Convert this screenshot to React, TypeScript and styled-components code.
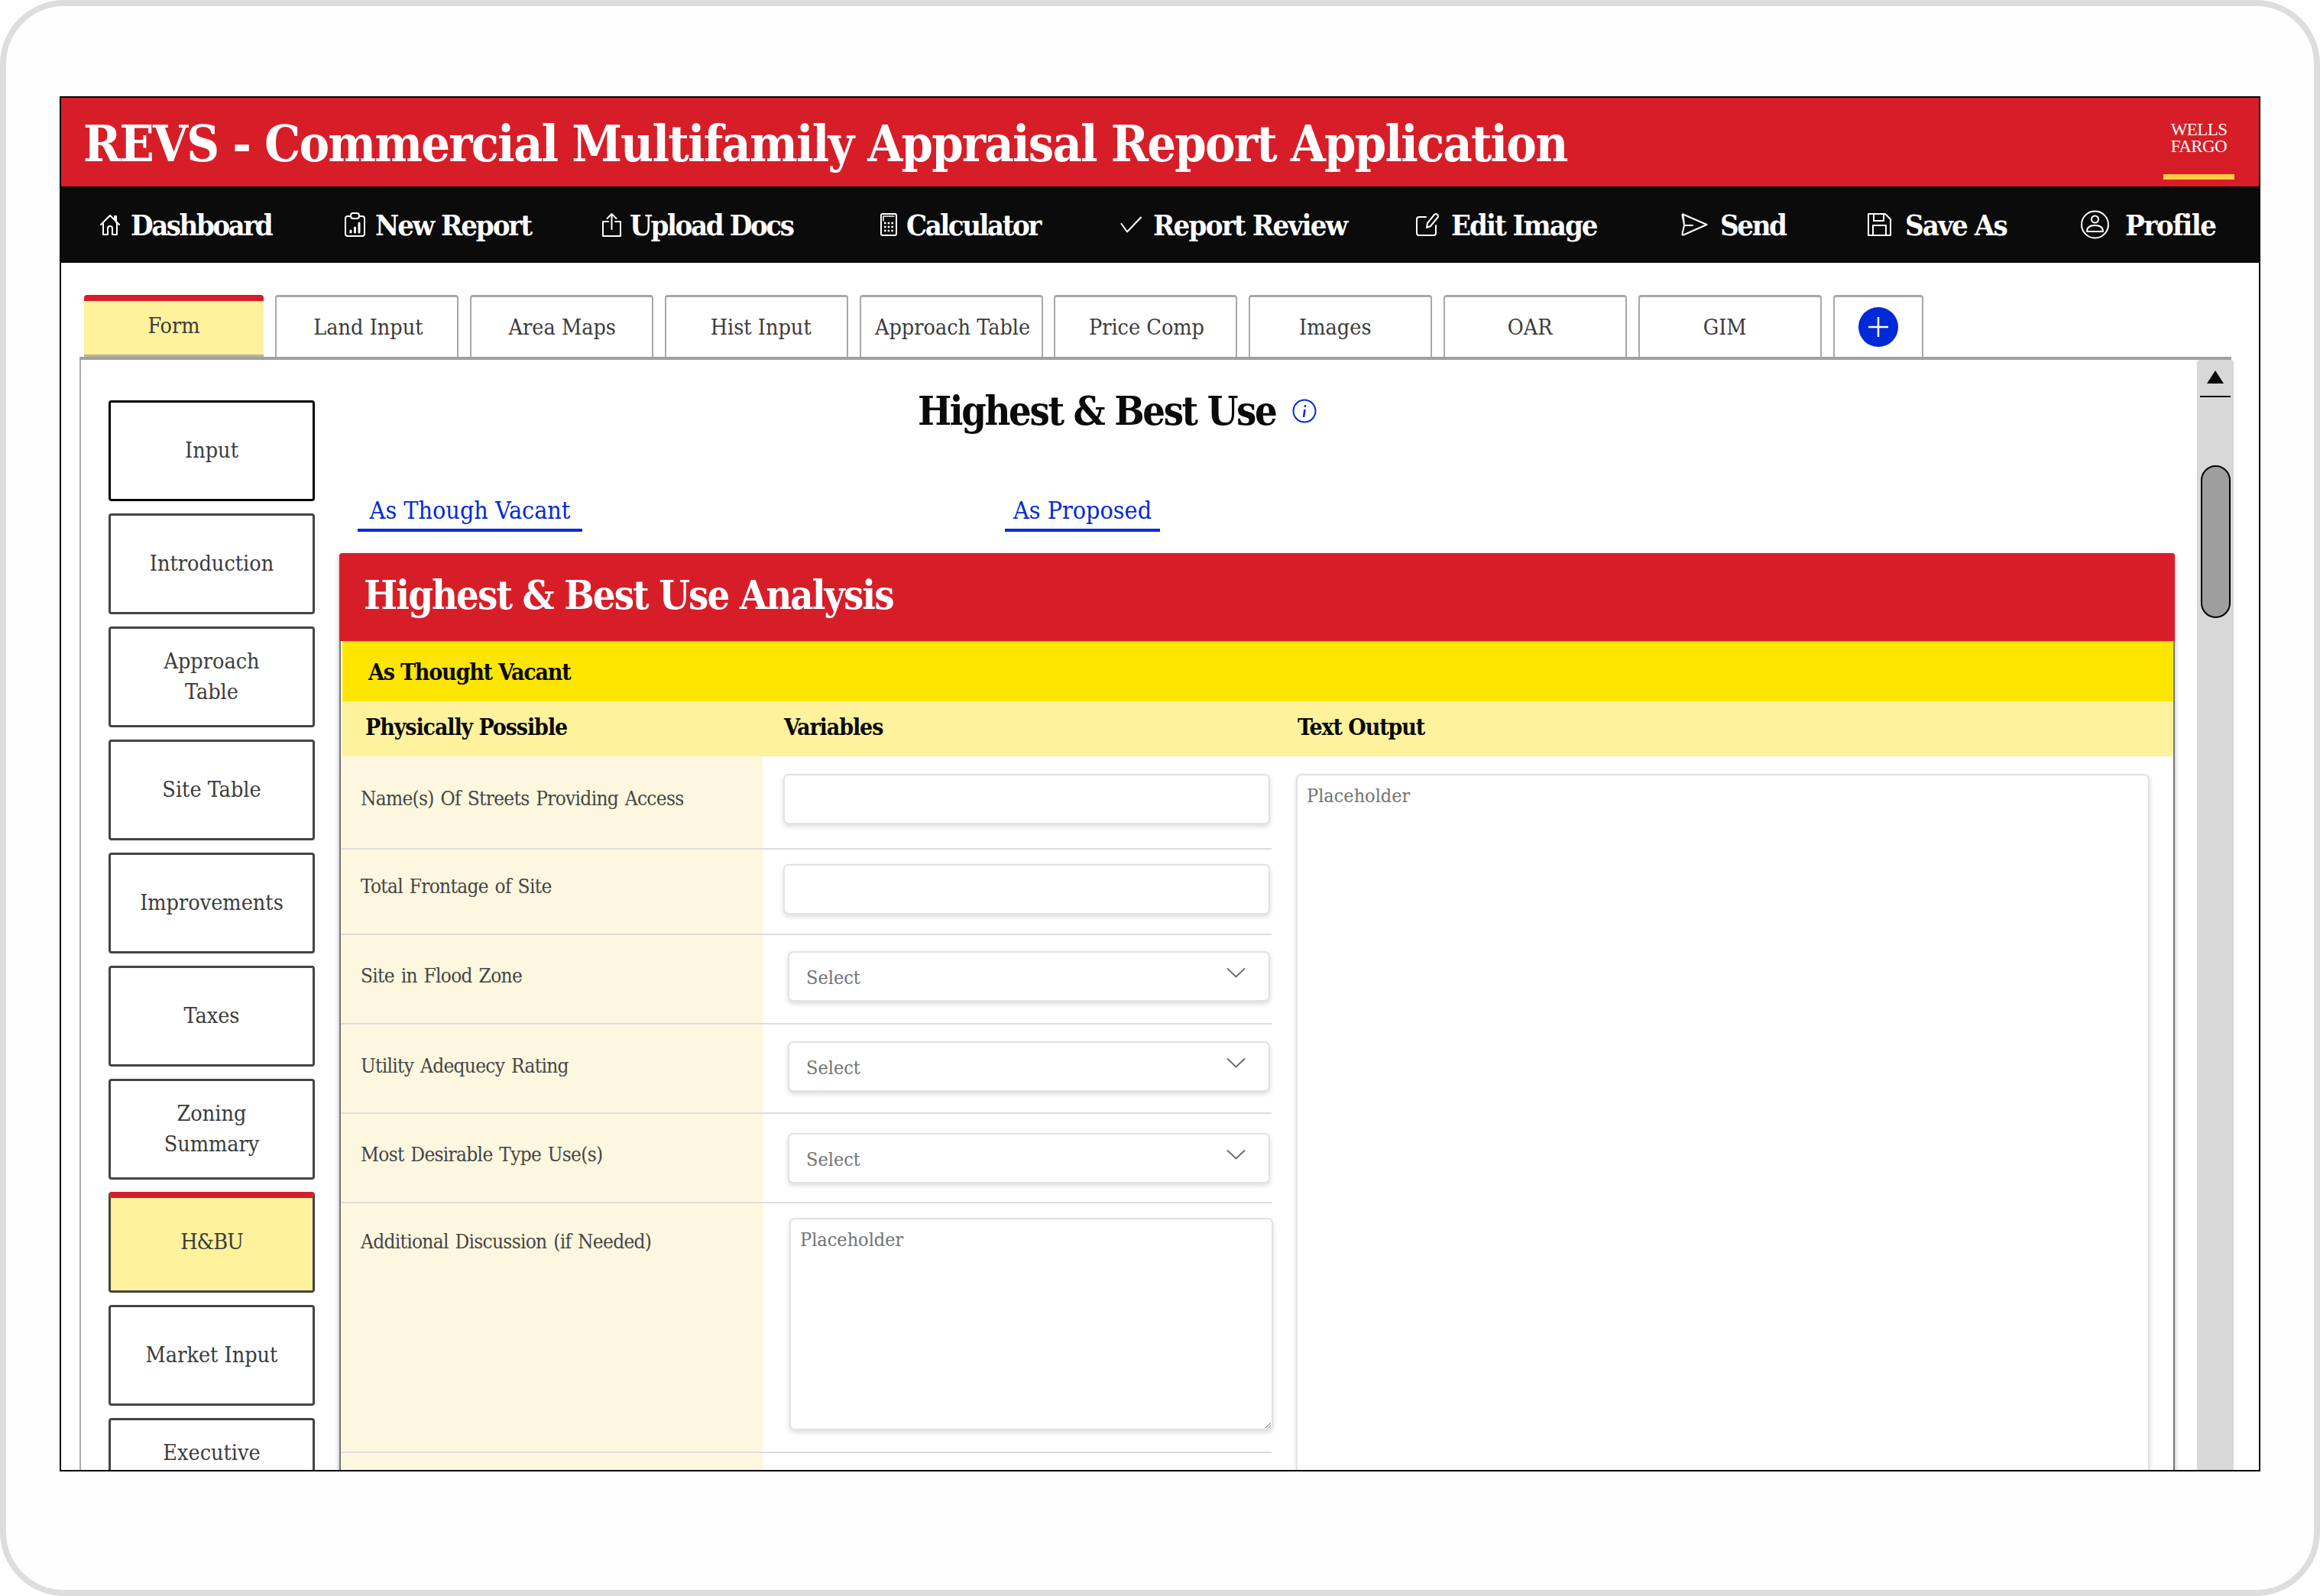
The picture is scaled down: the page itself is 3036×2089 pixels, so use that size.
import React from "react";
import styled, { createGlobalStyle } from "styled-components";

const RED = "#d71e28";
const BLUE = "#0029d9";
const PALE = "#fff29d";
const CREAM = "#fef7df";
const SLAB = `"DejaVu Serif Condensed", "DejaVu Serif", serif`;

const Global = createGlobalStyle`
  html, body { margin: 0; padding: 0; background: #fff; }
  * { box-sizing: border-box; }
  body { font-family: ${SLAB}; font-stretch: condensed; }
`;

const Frame = styled.div`
  width: 3036px; height: 2089px; border: 8px solid #ddd; border-radius: 84px;
  background: #fefefe; padding: 118px 0 0 70px; overflow: hidden;
`;
const AppWindow = styled.div`
  width: 2880px; height: 1800px; border: 2px solid #000; background: #fff;
  overflow: hidden; display: flex; flex-direction: column;
`;
const Header = styled.header`
  height: 116px; flex: none; background: ${RED}; display: flex; justify-content: space-between;
  align-items: stretch; padding: 0 32px 0 29px;
`;
const Title = styled.h1`
  margin: 4px 0 0; align-self: center; color: #fff; font-size: 66px; line-height: 80px; font-weight: 700;
  letter-spacing: -1.8px; white-space: nowrap;
`;
const Logo = styled.div`
  width: 93px; display: flex; flex-direction: column; align-items: center; padding: 31px 0 9px;
`;
const LogoText = styled.div`
  color: #fff; font-family: "Liberation Serif", serif; font-size: 23px; line-height: 22px; text-align: center;
  font-stretch: normal; letter-spacing: -0.6px;
`;
const LogoBar = styled.div`
  width: 100%; height: 7px; background: #ffcd41; margin-top: auto;
`;
const Nav = styled.nav`
  height: 100px; flex: none; background: #0b0b0b; display: flex; align-items: center; padding-left: 51px;
`;
const NavItem = styled.a<{ $w: number; $gap: number; $ls: number }>`
  width: ${(p) => p.$w}px; flex: none; display: flex; align-items: center; gap: ${(p) => p.$gap}px;
  color: #fff; font-size: 38px; line-height: 50px; font-weight: 700; white-space: nowrap; letter-spacing: ${(p) => p.$ls}px;
  svg { flex: none; }
`;
const NavLabel = styled.span`
  padding-top: 2px;
`;
const Content = styled.div`
  flex: 1; min-height: 0; display: flex; flex-direction: column; padding: 42px 0 0 24px;
`;
const TabRow = styled.div`
  height: 85px; flex: none; width: 2816px; display: flex; gap: 14.9px; padding-left: 6px;
  border-bottom: 4px solid #a0a0a0;
`;
const Tab = styled.div<{ $active?: boolean; $w?: number; $dx?: number }>`
  width: ${(p) => p.$w ?? 240}px; height: 81px; flex: none; display: flex; align-items: center; justify-content: center;
  font-size: 28.5px; color: #3c3c3c; border-radius: 4px 4px 0 0;
  border: 2px solid #a8a8a8; border-top-width: 3px; border-bottom: 0;
  background: #fff;
  span { transform: translateX(${(p) => p.$dx ?? 0}px); }
  ${(p) => p.$active && `background:${PALE}; border:0; border-top:8px solid ${RED}; border-bottom:3px solid #b5b5a0; width:235px; padding-bottom:5px;`}
`;
const PlusCircle = styled.span`
  width: 52px; height: 52px; border-radius: 50%; background: ${BLUE}; display: flex; align-items: center; justify-content: center;
`;
const Panel = styled.div`
  flex: 1; min-height: 0; width: 2819px; display: flex; border-left: 2px solid #aaa; padding-left: 36px; overflow: hidden;
`;
const Sidebar = styled.div`
  width: 270px; flex: none; display: flex; flex-direction: column; gap: 16px; padding-top: 53px;
`;
const SideBtn = styled.div<{ $active?: boolean; $first?: boolean }>`
  height: 132px; flex: none; display: flex; align-items: center; justify-content: center; text-align: center;
  white-space: pre-line; font-size: 28.5px; line-height: 40px; color: #3c3c3c; border-radius: 4px;
  border: ${(p) => (p.$first ? "3px solid #000" : "3px solid #444")};
  background: ${(p) => (p.$active ? PALE : "#fff")};
  ${(p) => p.$active && `border-top: 8px solid ${RED}; padding-bottom: 5px; letter-spacing: -1px;`}
`;
const Main = styled.main`
  width: 2402px; flex: none; margin-left: 32px; display: flex; flex-direction: column;
`;
const HeadingRow = styled.div`
  height: 125px; flex: none; display: flex; align-items: center; gap: 22px; padding: 9px 0 0 757px;
`;
const Heading = styled.h2`
  margin: 0; font-size: 52px; line-height: 64px; font-weight: 700; color: #0a0a0a; white-space: nowrap; letter-spacing: -2.4px;
`;
const LinkRow = styled.div`
  height: 128px; flex: none; display: flex; padding: 54px 0 0 24px; gap: 553px;
`;
const SubLink = styled.a<{ $w: number }>`
  width: ${(p) => p.$w}px; height: 46px; flex: none; display: flex; align-items: flex-start; justify-content: center;
  color: ${BLUE}; font-size: 32px; line-height: 36px; border-bottom: 4px solid ${BLUE}; white-space: nowrap;
`;
const Card = styled.section`
  flex: none; border-radius: 4px 4px 0 0; box-shadow: 0 2px 6px rgba(0,0,0,.3); background: #fff;
  border-left: 2px solid #777; border-right: 2px solid #777; min-height: 1300px;
`;
const CardTitle = styled.div`
  height: 115px; margin: 0 -2px; background: ${RED}; color: #fff; font-size: 52px; font-weight: 700; line-height: 110px;
  padding-left: 32px; border-radius: 4px 4px 0 0; white-space: nowrap; letter-spacing: -1.9px;
`;
const Band = styled.div`
  height: 79px; background: #ffe600; color: #0a0a0a; font-size: 30px; font-weight: 700; margin-left: 2px;
  display: flex; align-items: center; padding-left: 34px; border-top: 1px solid #f3a0a0; letter-spacing: -1.2px;
`;
const ColHead = styled.div`
  height: 72px; background: ${PALE}; color: #0a0a0a; font-size: 30px; font-weight: 700; display: grid;
  grid-template-columns: 548px 672px 1fr; align-items: center; padding: 0 0 6px 30px; margin-left: 2px; letter-spacing: -1.1px;
`;
const Body = styled.div`
  display: flex; align-items: flex-start;
`;
const LeftCol = styled.div`
  width: 1218px; flex: none;
`;
const Row = styled.div<{ $h: number }>`
  height: ${(p) => p.$h}px; display: grid; grid-template-columns: 552px 1fr; border-bottom: 2px solid #ddd;
`;
const LabelCell = styled.div<{ $top: number }>`
  background: ${CREAM}; color: #444; font-size: 26px; line-height: 30px; padding: ${(p) => p.$top}px 0 0 26px; white-space: nowrap;
  letter-spacing: -0.7px; word-spacing: 2px;
`;
const ControlCell = styled.div<{ $top: number; $left: number }>`
  padding: ${(p) => p.$top}px 2px 0 ${(p) => p.$left}px;
`;
const fieldStyle = `
  border: 2px solid #e2e2e2; border-radius: 7px; background: #fff; box-shadow: 0 3px 6px rgba(0,0,0,.14);
`;
const TextInput = styled.input`
  ${fieldStyle} display: block; width: 100%; height: 66px; outline: none;
`;
const SelectBox = styled.div`
  ${fieldStyle} width: 100%; height: 66px; display: flex; align-items: center; justify-content: space-between;
  padding: 3px 30px 0 22px; color: #737373; font-size: 25px;
  svg { transform: translateY(-7px); }
`;
const TextArea = styled.textarea<{ $w: number; $h: number }>`
  ${fieldStyle} display: block; width: ${(p) => p.$w}px; height: ${(p) => p.$h}px;
  padding: 12px 12px; font-family: ${SLAB}; font-stretch: condensed; font-size: 25px; line-height: 30px; resize: vertical; outline: none;
  &::placeholder { color: #737373; opacity: 1; }
`;
const OutputWrap = styled.div`
  margin: 23px 0 0 32px; flex: none;
`;
const Scrollbar = styled.div`
  width: 48px; flex: none; margin-left: 29px; background: #d8d8d8; border-radius: 4px 4px 0 0; display: flex; flex-direction: column; align-items: center;
`;
const ScrollUp = styled.div`
  width: 40px; height: 49px; flex: none; margin-bottom: 89px; border-bottom: 2px solid #0a0a0a; display: flex; justify-content: center; padding-top: 14px;
`;
const Thumb = styled.div`
  width: 39px; height: 200px; flex: none; background: #9e9e9e; border: 2px solid #000; border-radius: 20px;
`;

const I = { fill: "none", stroke: "#fff", strokeWidth: 2, strokeLinecap: "round", strokeLinejoin: "round" } as const;

const icons = {
  home: (
    <svg width="26" height="28" viewBox="0 0 26 28" {...I}>
      <path d="M1 14 13 2l12 12M4 12v15h6v-8q0-3 3-3t3 3v8h6V12M19 7V3h2v8" />
    </svg>
  ),
  report: (
    <svg width="27" height="32" viewBox="0 0 27 32" {...I}>
      <path d="M8 5H4Q1 5 1 8v20q0 3 3 3h19q3 0 3-3V8q0-3-3-3h-4" />
      <rect x="8" y="1" width="11" height="7" rx="3" />
      <path d="M8 24v2M13.500 20v6M19 14v12" strokeWidth="3" />
    </svg>
  ),
  upload: (
    <svg width="25" height="32" viewBox="0 0 25 32" {...I}>
      <path d="M8 12H1v19h23V12h-7M12.500 22V2M6.500 8l6-6 6 6" />
    </svg>
  ),
  calc: (
    <svg width="22" height="30" viewBox="0 0 22 30" {...I}>
      <rect x="1" y="1" width="20" height="28" rx="2" />
      <path d="M4 10V4h14" strokeWidth="1.500" />
      <path d="M5 13h12M5 18h12M5 23h12" strokeWidth="2.500" strokeDasharray="2.500 2.200" strokeLinecap="butt" />
    </svg>
  ),
  check: (
    <svg width="28" height="22" viewBox="0 0 28 22" {...I}>
      <path d="M1.500 10 9 20.500 27 1.500" />
    </svg>
  ),
  edit: (
    <svg width="30" height="30" viewBox="0 0 30 30" {...I}>
      <path d="M13 5H4Q1 5 1 8v18q0 3 3 3h19q3 0 3-3V16" />
      <path d="m14 19 1-6 9-11q2-2 4 0t0 4l-9 11Z" />
    </svg>
  ),
  send: (
    <svg width="35" height="30" viewBox="0 0 35 30" {...I}>
      <path d="M2.500 1.500 33.500 15 3 28.500q-2 .5-1.500-1.500L4 16h11M4 15 1.500 3q0-2 1-1.500Z" />
    </svg>
  ),
  save: (
    <svg width="31" height="30" viewBox="0 0 31 30" {...I}>
      <path d="M1 1h22l7 7v21H1ZM8 1v9h13V1M7 29V16h17v13" />
    </svg>
  ),
  profile: (
    <svg width="37" height="38" viewBox="0 0 37 38" {...I}>
      <circle cx="18.500" cy="19" r="17.500" />
      <circle cx="18.500" cy="12" r="4.500" />
      <path d="M8 28q0-8 10.500-8T29 28Z" />
    </svg>
  ),
};

const navItems = [
  { t: "Dashboard", i: icons.home, w: 320, g: 14, ls: -2.5 },
  { t: "New Report", i: icons.report, w: 337, g: 13, ls: -2.1 },
  { t: "Upload Docs", i: icons.upload, w: 364, g: 11, ls: -2.4 },
  { t: "Calculator", i: icons.calc, w: 314, g: 12, ls: -2.5 },
  { t: "Report Review", i: icons.check, w: 387, g: 15, ls: -1.8 },
  { t: "Edit Image", i: icons.edit, w: 347, g: 16, ls: -2 },
  { t: "Send", i: icons.send, w: 244, g: 16, ls: -2.4 },
  { t: "Save As", i: icons.save, w: 279, g: 18, ls: -1.9 },
  { t: "Profile", i: icons.profile, w: 200, g: 21, ls: -1.5 },
];

const tabs = [
  { t: "Land Input", dx: 2 },
  { t: "Area Maps", dx: 1 },
  { t: "Hist Input", dx: 6 },
  { t: "Approach Table", dx: 2 },
  { t: "Price Comp", dx: 1 },
  { t: "Images", dx: -7 },
  { t: "OAR", dx: -7 },
  { t: "GIM", dx: -7 },
];
const side = ["Input", "Introduction", "Approach\nTable", "Site Table", "Improvements", "Taxes", "Zoning\nSummary", "H&BU", "Market Input", "Executive\nSummary"];

const Chevron = () => (
  <svg width="25" height="14" viewBox="0 0 25 14" fill="none" stroke="#666" strokeWidth="1.800">
    <path d="M1 1.500 12.500 12.500 24 1.500" />
  </svg>
);

export default function App() {
  return (
    <Frame>
      <Global />
      <AppWindow>
        <Header>
          <Title>REVS - Commercial Multifamily Appraisal Report Application</Title>
          <Logo>
            <LogoText>WELLS<br />FARGO</LogoText>
            <LogoBar />
          </Logo>
        </Header>
        <Nav>
          {navItems.map((n) => (
            <NavItem key={n.t} $w={n.w} $gap={n.g} $ls={n.ls}>{n.i}<NavLabel>{n.t}</NavLabel></NavItem>
          ))}
        </Nav>
        <Content>
          <TabRow>
            <Tab $active><span>Form</span></Tab>
            {tabs.map((t) => <Tab key={t.t} $dx={t.dx}><span>{t.t}</span></Tab>)}
            <Tab $w={118}>
              <PlusCircle>
                <svg width="26" height="26" viewBox="0 0 26 26" stroke="#fff" strokeWidth="2.500"><path d="M13 0v26M0 13h26" /></svg>
              </PlusCircle>
            </Tab>
          </TabRow>
          <Panel>
            <Sidebar>
              {side.map((s, i) => <SideBtn key={s} $first={i === 0} $active={s === "H&BU"}>{s}</SideBtn>)}
            </Sidebar>
            <Main>
              <HeadingRow>
                <Heading>Highest &amp; Best Use</Heading>
                <svg width="32" height="32" viewBox="0 0 32 32" fill="none" stroke={BLUE} strokeWidth="2">
                  <circle cx="16" cy="16" r="14.500" />
                  <path d="M16.500 14 15 24" strokeWidth="2.500" />
                  <circle cx="17" cy="9.500" r="1.500" fill={BLUE} stroke="none" />
                </svg>
              </HeadingRow>
              <LinkRow>
                <SubLink $w={294}>As Though Vacant</SubLink>
                <SubLink $w={203}>As Proposed</SubLink>
              </LinkRow>
              <Card>
                <CardTitle>Highest &amp; Best Use Analysis</CardTitle>
                <Band>As Thought Vacant</Band>
                <ColHead>
                  <span>Physically Possible</span>
                  <span>Variables</span>
                  <span>Text Output</span>
                </ColHead>
                <Body>
                  <LeftCol>
                    <Row $h={122}>
                      <LabelCell $top={40}>Name(s) Of Streets Providing Access</LabelCell>
                      <ControlCell $top={23} $left={27}><TextInput readOnly /></ControlCell>
                    </Row>
                    <Row $h={112}>
                      <LabelCell $top={33}>Total Frontage of Site</LabelCell>
                      <ControlCell $top={19} $left={27}><TextInput readOnly /></ControlCell>
                    </Row>
                    <Row $h={117}>
                      <LabelCell $top={38}>Site in Flood Zone</LabelCell>
                      <ControlCell $top={21} $left={33}><SelectBox>Select<Chevron /></SelectBox></ControlCell>
                    </Row>
                    <Row $h={117}>
                      <LabelCell $top={39}>Utility Adequecy Rating</LabelCell>
                      <ControlCell $top={22} $left={33}><SelectBox>Select<Chevron /></SelectBox></ControlCell>
                    </Row>
                    <Row $h={117}>
                      <LabelCell $top={38}>Most Desirable Type Use(s)</LabelCell>
                      <ControlCell $top={25} $left={33}><SelectBox>Select<Chevron /></SelectBox></ControlCell>
                    </Row>
                    <Row $h={327}>
                      <LabelCell $top={35}>Additional Discussion (if Needed)</LabelCell>
                      <ControlCell $top={19} $left={35}><TextArea $w={633} $h={278} readOnly placeholder="Placeholder" /></ControlCell>
                    </Row>
                    <Row $h={200}>
                      <LabelCell $top={35} />
                      <ControlCell $top={0} $left={0} />
                    </Row>
                  </LeftCol>
                  <OutputWrap>
                    <TextArea $w={1117} $h={1200} readOnly placeholder="Placeholder" />
                  </OutputWrap>
                </Body>
              </Card>
            </Main>
            <Scrollbar>
              <ScrollUp>
                <svg width="22" height="17" viewBox="0 0 22 17" fill="#0a0a0a"><path d="M11 0 22 17H0Z" /></svg>
              </ScrollUp>
              <Thumb />
            </Scrollbar>
          </Panel>
        </Content>
      </AppWindow>
    </Frame>
  );
}
